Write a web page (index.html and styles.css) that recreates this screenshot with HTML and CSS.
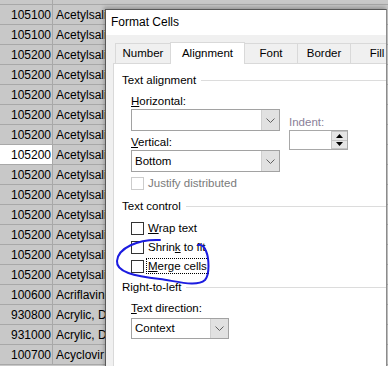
FILE: index.html
```html
<!DOCTYPE html>
<html lang="en">
<head>
  <meta charset="UTF-8" />
  <title>Format Cells</title>
  <link rel="stylesheet" href="styles.css">
</head>
<body>
  <div class="sheet">
    <div class="row"><div class="cell num"></div><div class="cell name"></div></div>
    <div class="row"><div class="cell num">105100</div><div class="cell name">Acetylsalicylic Acid</div></div>
    <div class="row"><div class="cell num">105100</div><div class="cell name">Acetylsalicylic Acid</div></div>
    <div class="row"><div class="cell num">105200</div><div class="cell name">Acetylsalicylic Acid</div></div>
    <div class="row"><div class="cell num">105200</div><div class="cell name">Acetylsalicylic Acid</div></div>
    <div class="row"><div class="cell num">105200</div><div class="cell name">Acetylsalicylic Acid</div></div>
    <div class="row"><div class="cell num">105200</div><div class="cell name">Acetylsalicylic Acid</div></div>
    <div class="row"><div class="cell num">105200</div><div class="cell name">Acetylsalicylic Acid</div></div>
    <div class="row"><div class="cell num active">105200</div><div class="cell name">Acetylsalicylic Acid</div></div>
    <div class="row"><div class="cell num">105200</div><div class="cell name">Acetylsalicylic Acid</div></div>
    <div class="row"><div class="cell num">105200</div><div class="cell name">Acetylsalicylic Acid</div></div>
    <div class="row"><div class="cell num">105200</div><div class="cell name">Acetylsalicylic Acid</div></div>
    <div class="row"><div class="cell num">105200</div><div class="cell name">Acetylsalicylic Acid</div></div>
    <div class="row"><div class="cell num">105200</div><div class="cell name">Acetylsalicylic Acid</div></div>
    <div class="row"><div class="cell num">105200</div><div class="cell name">Acetylsalicylic Acid</div></div>
    <div class="row"><div class="cell num">100600</div><div class="cell name">Acriflavine</div></div>
    <div class="row"><div class="cell num">930800</div><div class="cell name">Acrylic, Dental</div></div>
    <div class="row"><div class="cell num">931000</div><div class="cell name">Acrylic, Denture</div></div>
    <div class="row"><div class="cell num">100700</div><div class="cell name">Acyclovir</div></div>
  </div>

  <div class="dialog">
    <div class="dlg-title">Format Cells</div>
    <div class="dlg-body">
      <div class="tabs">
        <div class="tab tab-number">Number</div>
        <div class="tab tab-align active">Alignment</div>
        <div class="tab tab-font">Font</div>
        <div class="tab tab-border">Border</div>
        <div class="tab tab-fill">Fill</div>
      </div>

      <div class="panel">
        <div class="group-head"><span>Text alignment</span></div>
        <div class="align-row">
          <div class="align-col">
            <div class="label first"><u>H</u>orizontal:</div>
            <div class="combo wide">
              <span class="combo-text"></span>
              <span class="drop"><svg width="9" height="5" viewBox="0 0 9 5"><path d="M0.5 0.5 L4.5 4.5 L8.5 0.5" fill="none" stroke="#606060"/></svg></span>
            </div>
            <div class="label"><u>V</u>ertical:</div>
            <div class="combo wide">
              <span class="combo-text">Bottom</span>
              <span class="drop"><svg width="9" height="5" viewBox="0 0 9 5"><path d="M0.5 0.5 L4.5 4.5 L8.5 0.5" fill="none" stroke="#606060"/></svg></span>
            </div>
          </div>
          <div class="indent-col">
            <div class="label dim">Indent:</div>
            <div class="spin">
              <span class="spin-field"></span>
              <span class="spin-btns">
                <span class="spin-btn"><svg width="7" height="4" viewBox="0 0 7 4"><path d="M0 4 L3.5 0 L7 4 Z" fill="#000"/></svg></span>
                <span class="spin-btn"><svg width="7" height="4" viewBox="0 0 7 4"><path d="M0 0 L3.5 4 L7 0 Z" fill="#000"/></svg></span>
              </span>
            </div>
          </div>
        </div>
        <div class="check disabled first-check"><span class="box"></span><span>Justify distributed</span></div>

        <div class="group-head second"><span>Text control</span></div>
        <div class="check wrap-check"><span class="box"></span><span><u>W</u>rap text</span></div>
        <div class="check"><span class="box"></span><span>Shrin<u>k</u> to fit</span></div>
        <div class="check"><span class="box"></span><span class="focus"><u>M</u>erge cells</span></div>

        <div class="group-head third"><span>Right-to-left</span></div>
        <div class="label sub"><u>T</u>ext direction:</div>
        <div class="combo small">
          <span class="combo-text">Context</span>
          <span class="drop"><svg width="9" height="5" viewBox="0 0 9 5"><path d="M0.5 0.5 L4.5 4.5 L8.5 0.5" fill="none" stroke="#606060"/></svg></span>
        </div>
      </div>
    </div>
  </div>

  <svg class="scribble" width="388" height="366" viewBox="0 0 388 366">
    <path d="M160 240 C138 239 118 248 117 261 C116 272 134 276 160 279 C180 282 197 287 205 280 C210 274 209 258 206 251 C204 246 201 244 198 245" fill="none" stroke="#1c1ce0" stroke-width="2" stroke-linecap="round"/>
  </svg>
</body>
</html>
```

FILE: styles.css
```css
html, body {
  margin: 0;
  padding: 0;
  width: 388px;
  height: 366px;
  overflow: hidden;
  background: #c8c8c8;
}
.sheet {
  margin-top: -15px;
  font-family: "Liberation Sans", Arial, sans-serif;
  font-size: 12px;
  color: #000;
}
.row {
  display: flex;
  height: 20px;
  box-sizing: border-box;
  border-bottom: 1px solid #a8a8a8;
}
.cell {
  line-height: 17px;
  padding-top: 2px;
  white-space: nowrap;
  overflow: hidden;
  background: #c8c8c8;
}
.cell.num {
  width: 53px;
  box-sizing: border-box;
  text-align: right;
  padding-right: 1px;
  border-right: 1px solid #a8a8a8;
}
.cell.num.active {
  background: #fff;
}
.cell.name {
  width: 52px;
  padding-left: 3px;
  box-sizing: border-box;
}

.dialog {
  position: absolute;
  left: 105px;
  top: 9px;
  width: 282px;
  height: 370px;
  box-sizing: border-box;
  border: 1px solid #585858;
  border-right-color: #8c8c8c;
  background: #f0f0f0;
  overflow: hidden;
  box-shadow: -1px -2px 4px rgba(0,0,0,0.25);
  font-family: "Liberation Sans", Arial, sans-serif;
  font-size: 11.5px;
  color: #000;
}
.dlg-title {
  background: #fff;
  height: 25px;
  line-height: 24px;
  padding-left: 5px;
  font-size: 12px;
}
.dlg-body {
  padding: 8px 0 0 7px;
}
.tabs {
  display: flex;
  align-items: flex-end;
  padding-left: 2px;
  height: 20px;
}
.tab {
  height: 20px;
  box-sizing: border-box;
  border: 1px solid #d9d9d9;
  border-bottom: none;
  margin-right: -1px;
  text-align: center;
  line-height: 19px;
  background: #f0f0f0;
  flex: none;
}
.tab-number { width: 56px; }
.tab-align { width: 75px; }
.tab-font { width: 54px; }
.tab-border { width: 54px; }
.tab-fill { width: 54px; }
.tab.active {
  height: 22px;
  margin-bottom: -1px;
  background: #fff;
  position: relative;
  z-index: 1;
  line-height: 20px;
}

.panel {
  width: 300px;
  height: 310px;
  background: #fff;
  border: 1px solid #d9d9d9;
  padding: 8px 0 0 8px;
}
.group-head {
  display: flex;
  align-items: center;
  height: 16px;
  line-height: 16px;
}
.group-head::after {
  content: "";
  flex: 1;
  border-top: 1px solid #dcdcdc;
  margin-left: 5px;
}
.group-head.second { margin-top: 7px; }
.group-head.third { margin-top: 5px; }

.align-row {
  display: flex;
  gap: 9px;
  margin-left: 9px;
}
.align-col {
  width: 149px;
}
.label {
  height: 16px;
  line-height: 16px;
  margin-top: 3px;
}
.label.first { margin-top: 5px; }
.label.sub { margin-left: 9px; margin-top: 5px; }
.label.dim { color: #8a8098; margin-top: 26px; }

.combo {
  display: flex;
  height: 22px;
  box-sizing: border-box;
  border: 1px solid #a2a2a2;
  background: #fff;
}
.combo.wide { width: 149px; }
.combo.small { width: 98px; height: 21px; margin-left: 9px; margin-top: 2px; }
.combo-text {
  flex: 1;
  line-height: 20px;
  padding-left: 3px;
}
.combo.small .combo-text { line-height: 19px; }
.drop {
  width: 17px;
  background: #e1e1e1;
  border-left: 1px solid #cfcfcf;
  display: flex;
  align-items: center;
  justify-content: center;
}

.spin {
  display: flex;
  width: 59px;
  height: 20px;
  box-sizing: border-box;
  border: 1px solid #a8a8a8;
  background: #fff;
}
.spin-field { flex: 1; }
.spin-btns {
  width: 16px;
  display: flex;
  flex-direction: column;
}
.spin-btn {
  flex: 1;
  background: #e5e5e5;
  border: 1px solid #c4c4c4;
  border-right: none;
  display: flex;
  align-items: center;
  justify-content: center;
}
.spin-btn + .spin-btn { border-top: none; }

.check {
  display: flex;
  align-items: center;
  gap: 4px;
  height: 16px;
  margin-left: 9px;
  margin-top: 3px;
}
.check.first-check { margin-top: 3px; }
.check.wrap-check { margin-top: 6px; }
.box {
  width: 13px;
  height: 13px;
  box-sizing: border-box;
  border: 1px solid #333;
  background: #fff;
  flex: none;
}
.check.disabled { color: #7a7a7a; }
.check.disabled .box { border-color: #cccccc; }
.focus {
  outline: 1px dotted #000;
  outline-offset: 0;
  padding: 0 1px;
  margin-left: -1px;
  line-height: 14px;
}

.scribble {
  position: absolute;
  left: 0;
  top: 0;
  pointer-events: none;
}
```
